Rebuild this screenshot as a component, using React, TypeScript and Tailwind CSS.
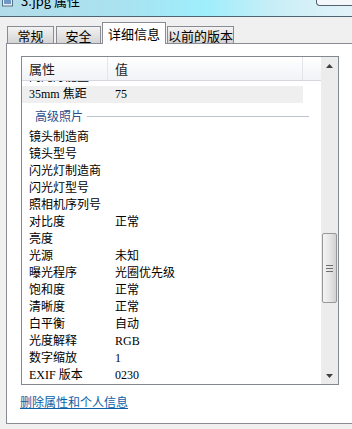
const rows: [string, string][] = [
  ['镜头制造商', ''],
  ['镜头型号', ''],
  ['闪光灯制造商', ''],
  ['闪光灯型号', ''],
  ['照相机序列号', ''],
  ['对比度', '正常'],
  ['亮度', ''],
  ['光源', '未知'],
  ['曝光程序', '光圈优先级'],
  ['饱和度', '正常'],
  ['清晰度', '正常'],
  ['白平衡', '自动'],
  ['光度解释', 'RGB'],
  ['数字缩放', '1'],
  ['EXIF 版本', '0230'],
];

function Row({ name, value, shaded }: { name: string; value: string; shaded?: boolean }) {
  return (
    <div className={`flex h-[17px] w-[281px] items-center text-[12px] leading-[17px] text-black ${shaded ? 'bg-[#efefef]' : ''}`}>
      <div className="w-[86px] pl-[7px] whitespace-nowrap">{name}</div>
      <div className="pl-[7px] whitespace-nowrap">{value}</div>
    </div>
  );
}

function Tab({ label, active, w }: { label: string; active?: boolean; w: string }) {
  if (active) {
    return (
      <div className={`relative z-10 -mx-px flex h-[22px] items-center justify-center border border-b-0 border-[#898c95] bg-white text-[13px] leading-none ${w}`}>
        {label}
      </div>
    );
  }
  return (
    <div className={`flex h-[18px] items-center justify-center border border-[#898c95] bg-gradient-to-b from-[#f3f3f3] to-[#d4d4d4] text-[13px] leading-none ${w}`}>
      {label}
    </div>
  );
}

export default function App() {
  return (
    <div className="h-[429px] w-[352px] overflow-hidden bg-[#f0f0f0] font-['Noto_Sans_CJK_SC',sans-serif] text-black">
      {/* title bar */}
      <div className="flex h-[17px] border-b border-[#4f6470] bg-[linear-gradient(90deg,#b3dce9_0%,#a9e2f0_35%,#9eeefc_58%,#c9eef7_78%,#e2f3f8_100%)]">
        <svg width="12" height="8" viewBox="0 0 12 8" className="ml-[2px]">
          <rect x="0.5" y="-2" width="10" height="8" fill="#e8eef4" stroke="#5b6f86" />
          <rect x="2" y="0" width="7" height="4" fill="#6e98c8" />
        </svg>
        <div className="-mt-[8px] ml-[7px] text-[13px] leading-[18px] whitespace-nowrap">3.jpg 属性</div>
        <div className="ml-auto mr-[-8px] h-[6px] w-[44px] rounded-b-[4px] border border-t-0 border-[#556070] bg-[#f4f8fa]" />
      </div>

      {/* tabs */}
      <div className="flex h-[27px] items-end gap-[2px] pl-[7px]">
        <Tab label="常规" w="w-[47px]" />
        <Tab label="安全" w="w-[45px]" />
        <Tab label="详细信息" w="w-[64px]" active />
        <Tab label="以前的版本" w="w-[67px]" />
      </div>

      {/* panel */}
      <div className="-mt-px ml-[6px] h-[381px] w-[360px] border border-[#898c95] bg-white pl-[14px] pt-[12px]">
        <div className="flex h-[329px] w-[318px] border border-[#828790] bg-white">
          <div className="flex min-w-0 flex-1 flex-col">
            {/* header */}
            <div className="flex h-[24px] shrink-0 border-b border-[#d5d8dc] bg-gradient-to-b from-white to-[#f1f3f6] text-[13px] leading-none text-[#1e1e1e]">
              <div className="flex w-[86px] items-center border-r border-[#e2e5e9] pl-[7px]">属性</div>
              <div className="flex w-[195px] items-center border-r border-[#e2e5e9] pl-[7px]">值</div>
            </div>
            {/* rows */}
            <div className="flex-1 overflow-hidden font-['Liberation_Serif','Noto_Sans_CJK_SC',serif]">
              <div className="-mt-[12px]">
                <Row name="闪光灯能量" value="" />
                <Row name="35mm 焦距" value="75" shaded />
                <div className="flex h-[26px] items-center pl-[13px] pr-[12px] font-['Noto_Sans_CJK_SC',sans-serif] text-[12px] text-[#2d4d8b]">
                  <span className="whitespace-nowrap">高级照片</span>
                  <div className="ml-[4px] h-px flex-1 bg-[#b9c5d1]" />
                </div>
                {rows.map(([n, v]) => (
                  <Row key={n} name={n} value={v} />
                ))}
              </div>
            </div>
          </div>
          {/* scrollbar */}
          <div className="flex w-[17px] shrink-0 flex-col bg-[#ececec]">
            <div className="flex h-[17px] items-center justify-center">
              <svg width="7" height="4" viewBox="0 0 7 4">
                <path d="M0 4 L3.5 0 L7 4 Z" fill="#404040" />
              </svg>
            </div>
            <div className="flex flex-1 flex-col px-px pt-[159px]">
              <div className="flex h-[70px] items-center justify-center rounded-[2px] border border-[#979797] bg-gradient-to-r from-[#f4f4f4] via-[#e6e6e6] to-[#d2d2d2]">
                <div className="flex flex-col gap-[2px]">
                  <div className="h-px w-[7px] bg-[#6e6e6e]" />
                  <div className="h-px w-[7px] bg-[#6e6e6e]" />
                  <div className="h-px w-[7px] bg-[#6e6e6e]" />
                </div>
              </div>
            </div>
            <div className="flex h-[17px] items-center justify-center">
              <svg width="7" height="4" viewBox="0 0 7 4">
                <path d="M0 0 L7 0 L3.5 4 Z" fill="#404040" />
              </svg>
            </div>
          </div>
        </div>
        <div className="-ml-[1px] mt-[9px] text-[12px] leading-[16px]">
          <a className="text-[#0b5fa8] underline">删除属性和个人信息</a>
        </div>
      </div>
    </div>
  );
}
